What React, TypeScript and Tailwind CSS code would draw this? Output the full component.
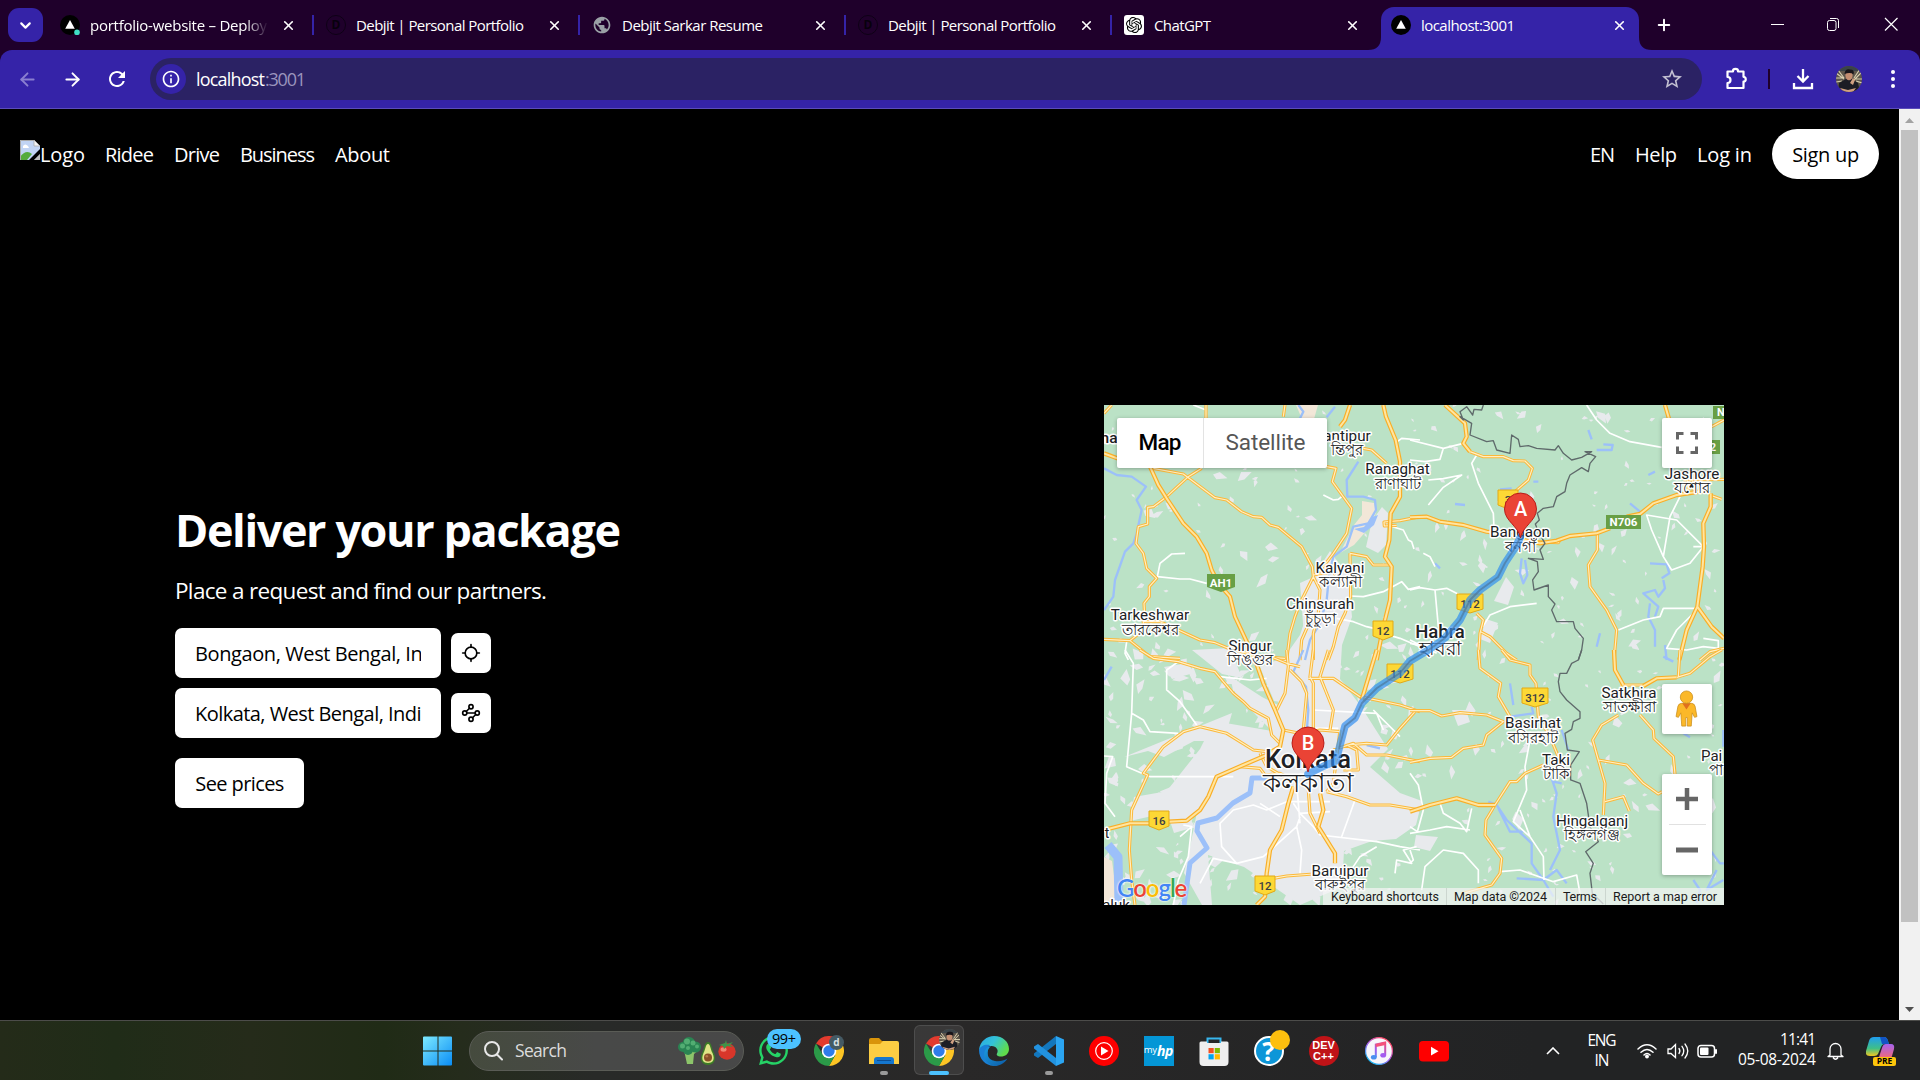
import { useLayoutEffect, useRef, useState, type ReactNode } from "react";
import { Locate, Waypoints, X, Plus, ArrowLeft, ArrowRight, ChevronDown } from "lucide-react";
import { MdRefresh, MdStarBorder, MdPublic, MdInfoOutline } from "react-icons/md";
import { SiOpenai } from "react-icons/si";
import { FaWhatsapp } from "react-icons/fa";

/* Single line of text whose tracking is tuned so that it fills `w` pixels. */
function Fit({ w, children }: { w: number; children: string }) {
  const ref = useRef<HTMLSpanElement>(null);
  const [tracking, setTracking] = useState(0);
  useLayoutEffect(() => {
    const el = ref.current;
    if (!el) return;
    el.style.letterSpacing = "0px";
    setTracking((w - el.getBoundingClientRect().width) / (children.length - 1 || 1));
  }, [w, children]);
  return (
    <span className="inline-block whitespace-nowrap" style={{ width: w }}>
      <span ref={ref} className="inline-block" style={{ letterSpacing: `${tracking}px` }}>
        {children}
      </span>
    </span>
  );
}

/* ---------- browser chrome ---------- */

const VercelIcon = ({ dot }: { dot?: boolean }) => (
  <svg viewBox="0 0 20 20" className="size-5 shrink-0">
    <circle cx="10" cy="10" r="10" fill="#000" />
    <path d="M10 5l4.800 8.800H5.200z" fill="#fff" />
    {dot && <circle cx="17" cy="17.400" r="2.800" fill="#3fe0c5" />}
  </svg>
);

const PortfolioIcon = () => (
  <span className="flex size-5 shrink-0 items-center justify-center rounded-full border border-[#0e0016] text-[12px] font-bold text-[#08000d]">
    D
  </span>
);

const tabs: { title: string; w: number; icon: ReactNode }[] = [
  { title: "Debjit | Personal Portfolio", w: 168, icon: <PortfolioIcon /> },
  { title: "Debjit Sarkar Resume", w: 141, icon: <MdPublic className="size-5 shrink-0 text-[#9aa0a6]" /> },
  { title: "Debjit | Personal Portfolio", w: 168, icon: <PortfolioIcon /> },
  {
    title: "ChatGPT",
    w: 57,
    icon: (
      <span className="flex size-5 shrink-0 items-center justify-center rounded-[3px] bg-white">
        <SiOpenai className="size-4 text-black" />
      </span>
    ),
  },
];

function TabStrip() {
  return (
    <div className="flex h-[50px] bg-[#1f002b] text-[15px] text-white">
      <div className="flex w-[43px] items-center pl-2">
        <div className="flex h-[34px] w-[35px] items-center justify-center rounded-[11px] bg-[#3523a8]">
          <ChevronDown className="size-[17px]" strokeWidth={3} />
        </div>
      </div>
      <div className="flex w-[269px] items-center pl-[17px]">
        <VercelIcon dot />
        <div className="ml-[10px] w-[178px] pt-px [mask-image:linear-gradient(to_right,black_87%,transparent)]">
          <Fit w={177}>portfolio-website – Deploy</Fit>
        </div>
        <X className="ml-[13px] size-[15px]" strokeWidth={2.600} />
      </div>
      {tabs.map((t, i) => (
        <div key={i} className="flex w-[266px] items-center">
          <div className="h-5 w-[2px] bg-[#3523a8]" />
          <div className="ml-[12px] mr-[10px]">{t.icon}</div>
          <span className="pt-px">
            <Fit w={t.w}>{t.title}</Fit>
          </span>
          <X className="ml-auto mr-[16px] size-[15px]" strokeWidth={2.600} />
        </div>
      ))}
      <div className="relative ml-[5px] mt-[7px] flex h-[43px] w-[258px] items-center rounded-t-[13px] bg-[#3523a8] pb-[7px] pl-[10px]">
        <svg className="absolute -left-[13px] bottom-0 size-[13px]" viewBox="0 0 13 13">
          <path d="M13 0v13H0Q13 13 13 0z" fill="#3523a8" />
        </svg>
        <svg className="absolute -right-[13px] bottom-0 size-[13px]" viewBox="0 0 13 13">
          <path d="M0 0v13h13Q0 13 0 0z" fill="#3523a8" />
        </svg>
        <VercelIcon />
        <span className="ml-[10px] pt-px">
          <Fit w={94}>localhost:3001</Fit>
        </span>
        <X className="ml-auto mr-[12px] size-[15px]" strokeWidth={2.600} />
      </div>
      <Plus className="ml-[16px] mt-[16px] size-[18px]" strokeWidth={2.600} />
      <svg className="ml-[96px] mt-[14px] h-5 w-[140px]" viewBox="0 0 140 20" fill="none" stroke="#fff">
        <path d="M2 10.500h13" />
        <rect x="58.500" y="6.500" width="8.500" height="10" rx="2" />
        <path d="M61 4.500h6.500a2 2 0 012 2V14" />
        <path d="M116 4l12.500 12.500M128.500 4L116 16.500" strokeWidth="1.200" />
      </svg>
    </div>
  );
}

const Avatar = ({ className }: { className: string }) => (
  <svg viewBox="0 0 26 26" className={className}>
    <defs>
      <clipPath id="avatarRound">
        <circle cx="13" cy="13" r="13" />
      </clipPath>
    </defs>
    <g clipPath="url(#avatarRound)">
      <rect width="26" height="26" fill="#5d564b" />
      <rect width="26" height="5" fill="#3a4348" />
      <path d="M0 7l8 6M2 4l6 8M26 6l-8 8M24 3l-6 9M0 12h7M19 13h7M0 16l6-1M26 17l-6-2" stroke="#d8cfae" strokeWidth="1.200" />
      <path d="M2 26l1-9 7-4h6l6 4 2 9z" fill="#1c1d24" />
      <ellipse cx="13" cy="9.500" rx="3.600" ry="4.800" fill="#c38d70" />
      <path d="M8.500 8Q9 2.500 14 3.500q5 0 3.500 5-3-2.500-9-.5z" fill="#17151a" />
      <path d="M14 17l3-5 2 2-2 5zM4 22l8 2 8-2-3 4H7z" fill="#d0a081" />
    </g>
  </svg>
);

function Toolbar() {
  return (
    <div className="bg-[#1f002b]">
      <div className="flex h-[59px] items-center rounded-t-[12px] border-b border-[#5b4cba] bg-[#3523a8] text-white">
        <ArrowLeft className="ml-[17px] size-[21px] text-[#8a7fd0]" strokeWidth={2.200} />
        <ArrowRight className="ml-[24px] size-[21px]" strokeWidth={2.200} />
        <MdRefresh className="ml-[22px] size-[24px]" />
        <div className="ml-[21px] flex h-[42px] w-[1552px] items-center rounded-full bg-[#2b2264] pl-[6px] pr-[18px]">
          <span className="flex size-[30px] items-center justify-center rounded-full bg-[#3523a8]">
            <MdInfoOutline className="size-5" />
          </span>
          <span className="ml-[10px] flex text-[18px]">
            <Fit w={69}>localhost</Fit>
            <span className="text-[#9a94bd]">
              <Fit w={41}>:3001</Fit>
            </span>
          </span>
          <MdStarBorder className="ml-auto size-[24px] text-[#c3c0d2]" />
        </div>
        <svg className="ml-[22px] size-6" viewBox="0 0 24 24" fill="none" stroke="#fff" strokeWidth="2.200" strokeLinejoin="round">
          <path d="M3.500 4.500h5.500v-.5a2.500 2.200 0 015 0v.5h5.500v5.300a2.200 2.300 0 010 4.700V21h-16v-5a3 3 0 000-6z" />
        </svg>
        <div className="ml-[20px] h-5 w-[2px] bg-[#1f002b]" />
        <svg className="ml-[21px] size-6" viewBox="0 0 24 24" fill="none" stroke="#fff" strokeWidth="2.300">
          <path d="M12 2v12M6.500 9l5.500 5.500L17.500 9M3 16v5h18v-5" />
        </svg>
        <Avatar className="ml-[21px] size-[26px]" />
        <svg className="ml-[25px] h-6 w-[12px]" viewBox="0 0 12 24" fill="#fff">
          <circle cx="6" cy="5" r="2" />
          <circle cx="6" cy="12" r="2" />
          <circle cx="6" cy="19" r="2" />
        </svg>
      </div>
    </div>
  );
}

/* ---------- page ---------- */

const BrokenImage = () => (
  <svg viewBox="0 0 20 20" className="size-5">
    <path d="M0 0h14l6 6v8L14 20H0z" fill="#c1d4f4" />
    <path d="M0 20v-3q6-8 12-3l-5 6z" fill="#55ab3c" />
    <path d="M3 6q2-3 5 0l1 2H3z" fill="#fff" />
    <path d="M.500 20V.500h13.500" fill="none" stroke="#a9a9a9" />
    <path d="M14 0l6 6h-6z" fill="#f4f4f4" stroke="#a9a9a9" strokeWidth=".8" />
    <path d="M20 9v5l-6 6H9z" fill="#000" />
    <path d="M20 14v6h-6z" fill="#bcbcbc" />
  </svg>
);

function Nav() {
  return (
    <nav className="flex h-[90px] items-center px-5 text-[20px] text-white">
      <div className="flex gap-5 pt-[2px]">
        <div className="flex w-[65px]">
          <BrokenImage />
          <Fit w={45}>Logo</Fit>
        </div>
        <Fit w={49}>Ridee</Fit>
        <Fit w={46}>Drive</Fit>
        <Fit w={75}>Business</Fit>
        <Fit w={55}>About</Fit>
      </div>
      <div className="ml-auto flex items-center gap-5">
        <span className="flex gap-5 pt-[2px]">
          <Fit w={25}>EN</Fit>
          <Fit w={42}>Help</Fit>
          <Fit w={55}>Log in</Fit>
        </span>
        <button className="h-[50px] w-[107px] rounded-full bg-white pt-[2px] text-black">
          <Fit w={67}>Sign up</Fit>
        </button>
      </div>
    </nav>
  );
}

function DeliveryForm() {
  return (
    <div className="flex w-[460px] flex-col pt-[100px] text-[20px] text-black">
      <h1 className="text-[45px] leading-[50px] font-bold text-white">
        <Fit w={446}>Deliver your package</Fit>
      </h1>
      <p className="mt-[18px] text-[22.500px] leading-[35px] text-white">
        <Fit w={372}>Place a request and find our partners.</Fit>
      </p>
      <div className="mt-[20px] flex items-center gap-[10px]">
        <div className="flex h-[50px] w-[266px] items-center rounded-[7px] bg-white px-5 pt-[2px]">
          <div className="w-[226px] overflow-hidden">
            <Fit w={255}>Bongaon, West Bengal, India</Fit>
          </div>
        </div>
        <button className="flex size-10 items-center justify-center rounded-[7px] bg-white">
          <Locate className="size-5" />
        </button>
      </div>
      <div className="mt-[10px] flex items-center gap-[10px]">
        <div className="flex h-[50px] w-[266px] items-center rounded-[7px] bg-white px-5 pt-[2px]">
          <div className="w-[227px] overflow-hidden">
            <Fit w={237}>Kolkata, West Bengal, India</Fit>
          </div>
        </div>
        <button className="flex size-10 items-center justify-center rounded-[7px] bg-white">
          <Waypoints className="size-5" />
        </button>
      </div>
      <button className="mt-[20px] h-[50px] w-[129px] rounded-[7px] bg-white pt-[2px]">
        <Fit w={89}>See prices</Fit>
      </button>
    </div>
  );
}

/* ---------- map ---------- */

/* The terrain is split in four tiles drawn at three times their shown size. */
type Tile = { at: [number, number]; roads: string; trunk: string; lanes: string; water: string };

const tiles: Tile[] = [
  {
    at: [-12, -15],
    trunk:
      "M150 200L175 255 200 295 250 370 290 410 320 460 335 510 355 550 390 590 405 650 440 725 465 790M12 160L60 178M850 15L858 50 887 120 900 185 900 290 872 340 868 420 855 470 875 500 870 600 850 680 830 780M750 15L735 60 720 80",
    roads:
      "M305 205L265 230 200 290 160 320 143 322 143 372 115 380 108 430 130 460 140 505 170 535 148 560 148 590 132 610 135 665 175 665M160 205L250 222 345 293 380 300 425 335 460 350 485 352 510 375 535 382 605 440 637 500 640 530 600 610 585 650 570 700 560 780M640 530L660 570 655 640 640 700 640 780M12 718L90 722 130 690 130 665 180 665 235 690 300 720 345 728 385 745 480 770 555 775M90 722L150 770 240 775M680 200L708 205 697 245 755 325 740 400 700 460 670 500 650 520M960 350L900 362 852 366 853 378 890 376M750 460L800 470 820 495 870 495M750 460L752 590 735 640 715 680 700 740 685 780M640 525L700 515 720 550M790 145L815 150 860 190M318 15V55M555 15L550 50M12 40L35 15M600 780L605 720 640 640",
    lanes:
      "M255 460L215 462 180 490 172 530 240 537 270 537 320 550M670 285L700 300 715 298 725 290M960 120L905 115 885 130M280 15L318 30M860 375L910 390 925 420 935 425 942 447M960 560L925 568 905 545 850 575 790 590 750 588M960 740L900 715 850 700M710 655L760 665 800 680 850 692M80 725L75 760 85 780",
    water:
      "M12 205L50 225 95 230 138 260 110 300 125 330 110 400 100 430 75 455 45 540 40 590 12 630M775 185L740 240 742 290 790 290 825 300 828 330 805 370 760 380 740 440 700 470 688 520 680 600 660 670 630 720 615 780M595 15L610 35 600 55M705 20L680 52",
  },
  {
    at: [918, -15],
    trunk:
      "M105 15L165 70 170 110 160 130 180 155M0 352L50 350 90 365 160 375 230 395 300 405 340 420 390 430 440 422 480 408 560 400 600 385M650 350L690 342 730 310 800 285 900 270M765 15L778 60M862 620L830 690 808 780M902 280L902 320 880 370 882 440 878 500 862 620 905 680 942 715",
    roads:
      "M180 155L220 170 280 170 310 182 345 183 367 205 355 240 315 275M380 425L445 428 450 420M900 285L935 298M820 240L942 238M562 400L562 450 535 495 540 560 590 630 620 690 612 780M942 60L905 80M200 640L220 660 210 700 205 780M212 695L240 710 290 760 320 780M942 745L900 755 870 780M845 205L850 270M830 215L835 280",
    lanes:
      "M0 120L100 145 160 130M100 145L90 178 45 185 0 180M200 165L185 190 205 250 250 340 252 385M530 15L560 60 600 100 660 125 755 142M55 240L100 236 155 225 100 262 55 315M0 570L30 563 75 570 110 565 160 590M75 570L85 680M215 685L240 645 300 620 380 610M810 290L780 350 760 470 785 510 840 490 880 440 800 360 710 345 725 390 760 470M625 690L700 660 750 650 760 625 860 625M860 630L800 690 770 745 830 750 880 740 925 745 925 722 880 715M40 460L60 470 75 500M880 440L850 440M0 730L60 740M0 720L80 760",
    water:
      "M535 90L545 118M560 150L605 150 608 135 580 133M335 475L330 520 340 550 352 525 345 480M720 490L770 493 778 520 755 535M760 540L765 565 745 590 735 570 700 580 745 620 735 650M720 610L715 650 735 690 735 740M270 268L305 265M135 312L165 315M660 310L690 335M715 225L735 215M570 700L560 740M370 245L385 245M765 735L770 780M75 490L90 505",
  },
  {
    at: [-12, 735],
    trunk:
      "M462 20L490 100 525 180 550 240 540 290 515 305M12 540L90 520 165 520M205 515L260 512 300 480 325 440 350 380 430 345 500 315M580 410L565 460 545 540 510 600 500 670 495 740 470 765M660 430L670 480 655 530 705 610 705 640M830 0L800 100 785 150",
    roads:
      "M120 0L160 25 235 35 300 55 345 65 370 95 400 130 430 155 450 175 505 205 515 255 540 280M560 0L565 50 555 130 530 180M500 15L560 40 600 50M605 95L570 60M605 95L620 130 610 240M640 0L630 80 640 100 640 240M685 0L660 80 700 180 690 240M625 85L700 85 780 140 900 165 960 185M550 240L600 250 660 240 720 245M720 240L700 400 680 425M300 230L250 245 190 290 130 370 143 375 95 480 88 600 95 690 105 765M300 230L340 240 380 250 460 300 500 305M420 350L480 355 495 375 540 370 580 390M480 310L500 350 560 385M520 685L560 678 640 672M625 420L630 490 660 550M680 425L740 440 810 465 870 465 960 480M740 285L800 280 860 285 900 235 945 185M740 285L770 300 775 360 730 360M700 300L760 280 800 315 860 315 960 335",
    lanes:
      "M75 0L100 40 95 190 80 350 150 380M95 190L130 210 150 245 235 250M235 35L200 60 200 120 240 155 290 225M12 318L38 320 20 370 15 460 45 500M150 380L400 380M360 80L450 90 500 85M240 560L275 530 250 525M275 530L265 620 235 690 220 765M300 700L340 625 410 640 490 620 590 530 600 500M410 640L365 590 360 520 400 480 460 465 500 480 560 455 690 455M580 460L600 490 690 485M600 490L640 530 660 555 830 575 900 590 960 600M765 450L725 560M590 530L605 600 600 670M830 590L780 620 740 680M640 180L830 190 850 240M640 235H715M590 400L600 520M950 590L910 600 935 640 890 630 885 670M480 460L540 500M820 180L900 260",
    water: "M610 0L580 65 618 110 625 180 620 250 600 360M12 90L35 50M800 285L840 295",
  },
  {
    at: [918, 735],
    trunk: "M0 485L60 465 140 445 205 465 255 465M700 108L740 85 800 82M612 0L615 60 640 105",
    roads:
      "M205 0L210 55 272 100 265 140 300 200M275 0L300 30 360 45 360 75 378 100 385 200 420 260 445 320M0 182L60 182 95 198 150 188 230 195 280 215 230 255 220 285 160 295 125 322 60 325 0 337M255 465L300 395 320 395 345 370 400 345M255 465L228 510 225 555 275 625 270 670 245 705 160 730M630 105H700M800 82L840 70 900 20 935 0M805 80L810 0M625 195L575 225 548 270 565 330 585 400 580 495M565 330L650 345 700 400 745 432 756 425M690 195L730 240 732 265 790 320 795 372M585 455L640 440 658 483",
    lanes:
      "M360 270L345 350 350 420 310 515 360 560 400 620 402 690M0 370L25 405 40 480 22 545 0 530M90 460L100 490 150 520 170 545 185 475M0 550L60 540 110 530 180 540M35 720L45 650 100 600 160 610 205 660 205 700M270 665L330 660 430 695 500 675 510 730M0 640L10 630 0 600M330 480L360 560",
    water:
      "M235 455L260 465 290 510 365 580 365 640 400 690 430 740M420 370L440 430 430 500 450 600 420 660M265 475L300 545 340 545M455 240L475 300M300 200L370 190 365 170M455 400L430 395M320 685L400 690 440 660 470 700M820 250L840 262M940 240V290M850 690L870 720 860 760M900 600L930 640 942 640M920 660L890 720 940 690M300 100L310 165M760 20L790 35",
  },
];

/* Small pale settlements scattered with a fixed seed; the south-west is denser. */
function makePatches(count: number) {
  let s = 77;
  const rnd = () => {
    s = (s * 16807) % 2147483647;
    return s / 2147483647;
  };
  let d = "";
  for (let i = 0; i < count; i++) {
    const dense = i % 3 === 0;
    const x = dense ? rnd() * 310 : rnd() * 620;
    const y = dense ? 240 + rnd() * 260 : rnd() * 500;
    const r = dense ? 4 + rnd() * 6 : 2.5 + rnd() * rnd() * 8;
    const a = rnd() * 6.283;
    const p = (t: number, k: number) => `${(x + Math.cos(a + t) * r * k).toFixed(1)} ${(y + Math.sin(a + t) * r * k).toFixed(1)}`;
    d += `M${p(0, 1)}L${p(1.7, 0.3 + rnd() * 0.4)}L${p(2.8, 0.5 + rnd() * 0.5)}L${p(4.6, 0.2 + rnd() * 0.4)}z`;
  }
  return d;
}
const patches = makePatches(560);

const towns: [string, string, number, number, number][] = [
  ["Ranaghat", "রাণাঘাট", 293.5, 68.5, 84],
  ["Kalyani", "কল্যানী", 236, 167.500, 182],
  ["Chinsurah", "চুঁচুড়া", 216, 204, 219],
  ["Tarkeshwar", "তারকেশ্বর", 46, 215, 230],
  ["Singur", "সিঙ্গুর", 146, 246, 260],
  ["antipur", "ন্তিপুর", 243, 36, 50],
  ["Bangaon", "বনগাঁ", 416, 132, 147],
  ["Jashore", "যশোর", 588, 73.500, 88],
  ["Satkhira", "সাতক্ষীরা", 525, 293, 307],
  ["Basirhat", "বসিরহাট", 429, 323, 338],
  ["Taki", "টাকি", 452, 359.500, 374],
  ["Hingalganj", "হিঙ্গলগঞ্জ", 488, 421, 435],
  ["Baruipur", "বারুইপুর", 236, 471, 485],
];

const shields: [string, number, number][] = [
  ["12", 279, 225],
  ["112", 366, 198],
  ["112", 296, 268],
  ["312", 431, 292],
  ["16", 55, 415],
  ["12", 161, 480],
  ["3", 404, 94],
];

function Pin({ x, y, letter }: { x: number; y: number; letter: string }) {
  return (
    <g transform={`translate(${x} ${y})`}>
      <path d="M0 0C-2-12-16-17-16-29a16 16 0 0132 0C16-17 2-12 0 0z" fill="#ea4335" stroke="#b31412" strokeWidth=".9" />
      <text y="-22.500" textAnchor="middle" fontSize="20" fontWeight="500" fill="#fff" fontFamily="Roboto">
        {letter}
      </text>
    </g>
  );
}

function MapCanvas() {
  return (
    <svg viewBox="0 0 620 500" className="h-[500px] w-[620px]" fill="none" strokeLinejoin="round">
      <rect width="620" height="500" fill="#bbe2c6" />
      <path
        d="M196 230L182 250 174 300 158 292 124 270 132 290 160 318 168 326 110 316 96 344 58 392 70 428 84 424 94 402 86 442 80 468 98 500 108 500 104 450 140 462 170 482 196 500 238 482 240 446 268 436 292 434 312 420 318 396 296 388 266 362 284 344 270 322 256 300 236 274 238 240 248 212 246 190 250 168 236 160 226 146 212 168 206 200z"
        fill="#e8eaed"
      />
      <path
        d="M278 102L268 116 262 142 274 148 282 140 284 108zM196 178L214 170 236 172 244 200 228 230 200 232zM190 248L156 262 170 296 200 300zM128 308L20 352 44 346 60 352 90 336 120 336zM30 392l34-6 6 20-44 10zM402 172l8 10-6 18-14-4zM382 214l12 4-8 20-10-4zM348 305l14 0 4 12-12 4zM88 245l38-2 12 30-20-4zM60 262l24-4 6 10-22 6zM312 430l22 2-8 14-16-4z"
        fill="#e8eaed"
      />
      <path d={patches} fill="#e8eaed" />
      <path d="M192 0h22l-4 14h-12zM258 96l12 2 2 10-8 16-14 16-14 8 8-16 6-12 8-10zM0 452l8 4 6 44H0z" fill="#f2e7d8" />
      <path d="M172 373H148L146 388 129 398 113 413 94 418 93 426 103 443 86 458 80 500" stroke="#9cc0f9" strokeWidth="5" />
      <path d="M4 440L14 452 15 500" stroke="#9cc0f9" strokeWidth="9" />
      <path d="M250 124l10-2 8-10 6-2-4 10-10 8z" fill="#9cc0f9" />
      {tiles.map((t, i) => (
        <g key={i} transform={`scale(.33333) translate(${t.at[0]} ${t.at[1]})`}>
          <path d={t.water} stroke="#9cc0f9" strokeWidth="7" />
          <path d={t.lanes} stroke="#fff" strokeWidth="5" />
          <path d={t.roads} stroke="#fbb83a" strokeWidth="9.500" />
          <path d={t.roads} stroke="#fff0c4" strokeWidth="3.500" />
          <path d={t.trunk} stroke="#f9ae27" strokeWidth="13" />
          <path d={t.trunk} stroke="#ffe59f" strokeWidth="6" />
        </g>
      ))}
      <g stroke="#5f6a6b" strokeWidth="4">
        <path
          transform="scale(.33333) translate(918 -15)"
          d="M220 15L215 30 192 28 188 45 170 20 150 35 160 60 150 50 185 70 180 105 230 125 250 122 260 150 300 160 305 105 325 118 330 140 355 137 380 145 435 150 445 137 460 160 485 180 515 172 545 155 525 155 557 170 540 190 535 215 515 203 480 225 470 250 465 275 440 290 430 320 400 325 382 340 388 360 376 372 385 395 405 430 390 450 400 478 355 475 382 485 385 515 368 540 372 570 415 555 415 590 435 612 425 630 440 665 490 665 495 685 520 715 515 750 505 780"
        />
        <path
          transform="scale(.33333) translate(918 735)"
          d="M515 0L505 30 485 40 470 70 450 70 445 95 450 125 470 150 510 185 510 205 490 215 485 238 465 250 472 300 508 305 482 345 482 390 510 400 530 460 540 530 565 575 527 605 550 640 540 670 547 730 580 762"
        />
      </g>

      <g fontFamily="Roboto, 'Noto Sans', sans-serif" fill="#202124" textAnchor="middle">
        {shields.map(([n, x, y], i) => (
          <g key={i}>
            <path
              d={n.length > 2 ? `M${x - 13} ${y - 9}h26v15l-13 4-13-4z` : `M${x - 10} ${y - 9}h20v15l-10 4-10-4z`}
              fill="#fdd835"
              stroke="#e2a916"
            />
            <text x={x} y={y + 5} fontSize="11.500" fontWeight="500" fill="#3c4043">
              {n}
            </text>
          </g>
        ))}
        <path d="M103 169h28v13l-14 5-14-5z" fill="#689f45" />
        <text x="117" y="182" fontSize="11.500" fontWeight="700" fill="#fff">AH1</text>
        <rect x="502" y="110" width="35" height="14" fill="#689f45" />
        <text x="519.500" y="121" fontSize="11.500" fontWeight="700" fill="#fff">N706</text>
        <rect x="609" y="1" width="14" height="13" fill="#689f45" />
        <text x="617" y="11" fontSize="11" fontWeight="700" fill="#fff">N</text>
        <rect x="594" y="35" width="22" height="14" fill="#689f45" />
        <text x="609" y="46" fontSize="11" fontWeight="700" fill="#fff">2</text>

        <g stroke="#fff" strokeWidth="3" paintOrder="stroke">
          {towns.map(([en, bn, x, y1, y2]) => (
            <g key={en}>
              <text x={x} y={y1} fontSize="15.200">{en}</text>
              <text x={x} y={y2} fontSize="15">{bn}</text>
            </g>
          ))}
          <text x="336" y="232.500" fontSize="18.500" fontWeight="500">Habra</text>
          <text x="336" y="250" fontSize="18.500">হাবরা</text>
          <text x="204" y="363" fontSize="25.500" fontWeight="500">Kolkata</text>
          <text x="204" y="386.500" fontSize="25.500">কলকাতা</text>
          <text x="5" y="38" fontSize="15.500" fontWeight="500">na</text>
          <text x="597" y="356" fontSize="15" textAnchor="start">Pai</text>
          <text x="605" y="370" fontSize="15" textAnchor="start">পা</text>
          <text x="3" y="433" fontSize="14">t</text>
          <text x="12" y="505" fontSize="15">aluk</text>
        </g>
      </g>

      <path
        d="M416 133L411 143 401 158 394 172 376 185 366 195 356 215 341 233 326 244 306 256 296 268 273 283 258 298 251 313 241 321 235 344 232 356 220 361 204 369"
        stroke="#2c8cf0"
        strokeOpacity=".68"
        strokeWidth="7.500"
        strokeLinecap="round"
      />
      <path
        d="M416 133L411 143 401 158 394 172 376 185 366 195 356 215 341 233 326 244 306 256 296 268 273 283 258 298 251 313 241 321 235 344"
        stroke="#4b7091"
        strokeOpacity=".6"
        strokeWidth="1.800"
      />
      <Pin x={416.5} y={133} letter="A" />
      <Pin x={204} y={367} letter="B" />
    </svg>
  );
}

const Pegman = () => (
  <svg viewBox="0 0 24 40" className="h-[38px] w-[23px]">
    <path d="M3 17q1-3 4-3h10q3 0 4 3l2 11-2.500.800L18 24l-1 14h-4.200v-9h-1.600v9H7l-1-14-2.500 4.800L1 28z" fill="#fbb829" stroke="#c98d1a" strokeWidth=".8" />
    <path d="M7.500 14h9L12 20.500z" fill="#e0701e" />
    <circle cx="12" cy="7.500" r="6.500" fill="#fbb829" stroke="#c98d1a" strokeWidth=".8" />
  </svg>
);

function MapPanel() {
  return (
    <div className="relative h-[500px] w-[620px] overflow-hidden font-[Roboto]">
      <MapCanvas />
      <div className="absolute left-[13px] top-[13px] flex h-[50px] items-center rounded-[2px] bg-white text-[22.500px] shadow-[0_1px_4px_rgba(0,0,0,0.3)]">
        <div className="flex h-full w-[87px] items-center justify-center border-r border-[#e3e3e3] font-medium text-black">
          <Fit w={43}>Map</Fit>
        </div>
        <div className="flex h-full w-[123px] items-center justify-center text-[#565656]">
          <Fit w={80}>Satellite</Fit>
        </div>
      </div>
      <div className="absolute right-[12px] top-[13px] flex size-[50px] items-center justify-center rounded-[2px] bg-white shadow-[0_1px_4px_rgba(0,0,0,0.3)]">
        <svg viewBox="0 0 22 22" className="size-[22px]" fill="none" stroke="#666" strokeWidth="3">
          <path d="M1.500 7.500v-6h6M14.500 1.500h6v6M20.500 14.500v6h-6M7.500 20.500h-6v-6" />
        </svg>
      </div>
      <div className="absolute right-[12px] top-[279px] flex size-[50px] items-center justify-center rounded-[2px] bg-white shadow-[0_1px_4px_rgba(0,0,0,0.3)]">
        <div className="pr-[2px]">
          <Pegman />
        </div>
      </div>
      <div className="absolute right-[12px] top-[369px] flex h-[101px] w-[50px] flex-col items-center rounded-[2px] bg-white shadow-[0_1px_4px_rgba(0,0,0,0.3)]">
        <svg viewBox="0 0 22 22" className="mt-[14px] size-[22px]" stroke="#666" strokeWidth="4.500">
          <path d="M0 11h22M11 0v22" />
        </svg>
        <div className="mt-[14px] h-px w-[37px] bg-[#e1e1e1]" />
        <svg viewBox="0 0 22 22" className="mt-[14px] size-[22px]" stroke="#666" strokeWidth="5">
          <path d="M0 11h22" />
        </svg>
      </div>
      <div className="absolute bottom-0 left-[13px] font-[Lato] text-[24px] leading-[34px] font-semibold tracking-[-1.100px] text-[#4285f4] [text-shadow:0_0_2px_white,0_0_2px_white]">
        G<span className="text-[#ea4335]">o</span>
        <span className="text-[#fbbc05]">o</span>g<span className="text-[#34a853]">l</span>
        <span className="text-[#ea4335]">e</span>
      </div>
      <div className="absolute bottom-0 right-0 flex h-[17px] items-center bg-[#f5f5f5]/70 pt-px text-[12.500px] text-[#1a1a1a]">
        <span className="flex w-[123px] justify-end pr-[7px]">
          <Fit w={108}>Keyboard shortcuts</Fit>
        </span>
        <span className="border-l border-black/10 pl-[7px] pr-[8px]">
          <Fit w={93}>Map data ©2024</Fit>
        </span>
        <span className="border-l border-black/10 pl-[7px] pr-[8px]">
          <Fit w={34}>Terms</Fit>
        </span>
        <span className="border-l border-black/10 pl-[7px] pr-[7px]">
          <Fit w={104}>Report a map error</Fit>
        </span>
      </div>
    </div>
  );
}

function ScrollBar() {
  return (
    <div className="flex w-[21px] flex-col items-center bg-[#f1f1f1]">
      <svg viewBox="0 0 21 21" className="size-[21px]">
        <path d="M6 14h9l-4.500-5z" fill="#a3a3a3" />
      </svg>
      <div className="h-[792px] w-[17px] bg-[#c1c1c1]" />
      <svg viewBox="0 0 21 21" className="mt-auto size-[21px]">
        <path d="M6 8h9l-4.500 5z" fill="#505050" />
      </svg>
    </div>
  );
}

/* ---------- taskbar ---------- */

const Chrome = () => (
  <svg viewBox="0 0 30 30" className="size-[30px]">
    <path d="M15 15L2 7.500a15 15 0 0126 0z" fill="#e33b2e" />
    <path d="M15 8h13.300A15 15 0 0115 30l6.300-11z" fill="#fdc524" />
    <path d="M2 7.500L8.800 18.500 15 22l6.300-3L15 30A15 15 0 012 7.500z" fill="#2b9a48" />
    <circle cx="15" cy="15" r="7.300" fill="#fff" />
    <circle cx="15" cy="15" r="5.700" fill="#2f7cea" />
  </svg>
);

const WindowsLogo = () => (
  <svg viewBox="0 0 30 30" className="size-[30px]">
    <defs>
      <linearGradient id="win" x1="0" y1="0" x2="1" y2="1">
        <stop offset="0" stopColor="#7deaff" />
        <stop offset="1" stopColor="#0a8df5" />
      </linearGradient>
    </defs>
    <path
      d="M1 .500h13.500V14.500H0V1.500a1 1 0 011-1zM15.500.500H28a1 1 0 011 1v13H15.500zM0 15.500h14.500v14H1a1 1 0 01-1-1zM15.500 15.500H29v13a1 1 0 01-1 1H15.500z"
      fill="url(#win)"
    />
  </svg>
);

const Vegetables = () => (
  <svg viewBox="0 0 58 28" className="h-[28px] w-[58px]">
    <path d="M6 13l3 14h6l1-10 5-4z" fill="#8cc56a" />
    <g fill="#2a8452">
      <circle cx="5" cy="10" r="5" />
      <circle cx="11" cy="6.500" r="6.500" />
      <circle cx="17.500" cy="10" r="5.500" />
      <circle cx="10" cy="13" r="5" />
    </g>
    <g fill="#52ad72">
      <circle cx="9" cy="4.500" r="3" />
      <circle cx="15" cy="6" r="2.500" />
      <circle cx="4.500" cy="9" r="2.500" />
      <circle cx="10" cy="11" r="2" />
      <circle cx="19" cy="9.500" r="2" />
    </g>
    <path d="M30 5c-3.500 0-3.500 6-5.500 10-4 8 0 13 5.500 13s9.500-5 5.500-13c-2-4-2-10-5.500-10z" fill="#3c7c26" />
    <path d="M30 7c-2.500 0-2.500 6-4.500 9-3 7 0 10 4.500 10s7.500-3 4.500-10c-2-3-2-9-4.500-9z" fill="#dfe486" />
    <circle cx="30" cy="20.500" r="4" fill="#8b4f28" />
    <circle cx="28.800" cy="19.300" r="1.300" fill="#b77a4c" />
    <ellipse cx="49" cy="14.500" rx="8.700" ry="8.300" fill="#d8362a" />
    <ellipse cx="45.500" cy="12.500" rx="3" ry="2.200" fill="#f08673" />
    <path d="M48 3l1 4 6-2-3 3 3 2-6-1-3 3-1-3-4-1 6-2z" fill="#3f9348" />
  </svg>
);

const Folder = () => (
  <svg viewBox="0 0 30 28" className="h-[28px] w-[30px]">
    <path d="M0 3q0-2 2-2h8l3 3h10v6H0z" fill="#d9940a" />
    <path d="M0 7h11l3-3h14q2 0 2 2v21H0z" fill="#fccd43" />
    <path d="M5 27v-4q0-3 3-3h14q3 0 3 3v4z" fill="#1577cf" />
    <path d="M8 23.500h14" stroke="#0c4f95" />
  </svg>
);

const Edge = () => (
  <svg viewBox="0 0 30 30" className="size-[30px]">
    <defs>
      <linearGradient id="edgeTop" x1="0" y1="0" x2="1" y2=".5">
        <stop offset="0" stopColor="#29a7e5" />
        <stop offset=".5" stopColor="#33c2d8" />
        <stop offset="1" stopColor="#5fdc4c" />
      </linearGradient>
      <linearGradient id="edgeLow" x1="0" y1="0" x2="1" y2="1">
        <stop offset="0" stopColor="#1b9de2" />
        <stop offset="1" stopColor="#0c59a4" />
      </linearGradient>
    </defs>
    <path d="M0 14C1 5 8 0 15 0c9 0 15 6 15 13 0 5-4 7.500-8 7.500-3.500 0-5-1.500-4-3 2-3-.500-7.500-5.500-7.500C7 10 2 12 0 14z" fill="url(#edgeTop)" />
    <path d="M0 14c1-4 6-6 11-5-4 3-4 18 6 20.500C8 31 0 24 0 14z" fill="#1a80d6" />
    <path d="M12 10c-6 5-4 14 4 15 6 .8 10-1 12.500-2.500C25 28 20 30 16 30 8 29 2 21 7 13c1.500-2 3-2.500 5-3z" fill="url(#edgeLow)" />
  </svg>
);

const VsCode = () => (
  <svg viewBox="0 0 30 30" className="size-[30px]">
    <path d="M22 0v8L4 22 0 19.500v-2z" fill="#1377bd" />
    <path d="M22 30v-8L4 8 0 10.500v2z" fill="#2292df" />
    <path d="M22 0l8 3.500v23L22 30z" fill="#2ba5f2" />
  </svg>
);

const YtMusic = () => (
  <svg viewBox="0 0 30 30" className="size-[30px]">
    <circle cx="15" cy="15" r="15" fill="#fe0000" />
    <circle cx="15" cy="15" r="8.300" fill="none" stroke="#fff" strokeWidth="1.200" />
    <path d="M12 10.500l7.500 4.500-7.500 4.500z" fill="#fff" />
  </svg>
);

const Store = () => (
  <svg viewBox="0 0 30 30" className="size-[30px]">
    <path d="M8.500 8V2.500h13V8" fill="none" stroke="#37b6ee" strokeWidth="2" />
    <path d="M.500 7q0-1.500 1.500-1.500h6V7h14V5.500h6q1.500 0 1.500 1.500v19q0 4-4 4h-21q-4 0-4-4z" fill="#efefef" />
    <path d="M9.500 12h5.200v5.200H9.500z" fill="#f25022" />
    <path d="M15.700 12h5.200v5.200h-5.200z" fill="#7fba00" />
    <path d="M9.500 18.200h5.200v5.200H9.500z" fill="#00a4ef" />
    <path d="M15.700 18.200h5.200v5.200h-5.200z" fill="#ffb900" />
  </svg>
);

const Help = () => (
  <div className="relative flex size-[30px] items-center justify-center rounded-full border-2 border-white bg-[#0d96d8] text-[26px] leading-none font-bold">
    ?
    <span className="absolute -right-[8px] -top-[8px] size-5 rounded-full bg-[#fdbf0e]" />
  </div>
);

const DevCpp = () => (
  <div className="flex size-[30px] flex-col items-center justify-center rounded-full bg-[#c01317] font-['Liberation_Sans'] text-[11px] leading-[11px] font-bold">
    <span>DEV</span>
    <span>C++</span>
  </div>
);

const Music = () => (
  <svg viewBox="0 0 30 30" className="size-[30px]">
    <defs>
      <linearGradient id="note" gradientUnits="userSpaceOnUse" x1="22" y1="5" x2="7" y2="25">
        <stop offset="0" stopColor="#fb4a6c" />
        <stop offset=".55" stopColor="#9a5ef0" />
        <stop offset="1" stopColor="#22b5f4" />
      </linearGradient>
    </defs>
    <circle cx="15" cy="15" r="13.400" fill="#f8f6fb" stroke="url(#note)" strokeWidth="1.200" />
    <path d="M11.800 21V8.500l9.400-2V19" fill="none" stroke="url(#note)" strokeWidth="2" />
    <path d="M11.800 9.500l9.400-2" stroke="#f5527a" strokeWidth="3" />
    <ellipse cx="9.800" cy="21.300" rx="2.900" ry="2.300" fill="#4a8ff0" />
    <ellipse cx="19.200" cy="19.300" rx="2.900" ry="2.300" fill="#a45cf0" />
  </svg>
);

const YouTube = () => (
  <svg viewBox="0 0 30 30" className="size-[30px]">
    <rect y="5" width="30" height="20.500" rx="4" fill="#fe0000" />
    <path d="M12 10.800l7.500 4.400-7.500 4.400z" fill="#fff" />
  </svg>
);

const pinned: { icon: ReactNode; mark?: boolean }[] = [
  { icon: <Edge /> },
  { icon: <VsCode />, mark: true },
  { icon: <YtMusic /> },
  {
    icon: (
      <div className="flex size-[30px] items-center justify-center bg-[#0496d6] text-[9.500px] tracking-tight">
        my<span className="text-[14px] font-bold italic">hp</span>
      </div>
    ),
  },
  { icon: <Store /> },
  { icon: <Help /> },
  { icon: <DevCpp /> },
  { icon: <Music /> },
  { icon: <YouTube /> },
];

function Slot({ children, mark }: { children: ReactNode; mark?: boolean }) {
  return (
    <div className="relative flex h-[60px] w-[55px] items-center justify-center">
      {children}
      {mark && <span className="absolute bottom-[6px] h-1 w-2 rounded-full bg-[#9a9a9a]" />}
    </div>
  );
}

const Copilot = () => (
  <div className="relative size-[30px]">
    <svg viewBox="0 0 30 30" className="size-[30px]">
      <defs>
        <linearGradient id="copA" x1="0" y1="0" x2="0" y2="1">
          <stop offset="0" stopColor="#1f9df0" />
          <stop offset=".6" stopColor="#3fbf87" />
          <stop offset="1" stopColor="#f2c821" />
        </linearGradient>
        <linearGradient id="copB" x1="0" y1="0" x2="0" y2="1">
          <stop offset="0" stopColor="#a562ee" />
          <stop offset="1" stopColor="#fb6a6a" />
        </linearGradient>
      </defs>
      <path d="M8 1h10q3 0 4 4l1 3h-4q-3 0-4 3l-3 7q-1 2-4 2H4q-5 0-4-5L3 5q1-4 5-4z" fill="url(#copA)" />
      <path d="M14 1h4q3 0 4 4l1 3h-7z" fill="#1254c4" />
      <path d="M20 8h5q4 0 3 5l-2 7q-1 4-5 4H9q3 0 4-3l3-9q1-4 4-4z" fill="url(#copB)" />
    </svg>
    <span className="absolute bottom-0 right-0 flex h-[9px] w-[23px] items-center justify-center rounded-[2px] bg-[#fdc50b] text-[8.500px] leading-none font-bold text-black">
      PRE
    </span>
  </div>
);

function Taskbar() {
  return (
    <div className="flex h-[60px] items-center border-t border-[#4c4c4a] bg-[linear-gradient(90deg,#242b19_0%,#202c18_6%,#252b1a_13%,#202b16_20%,#252c1c_24%,#282a28_31%,#292828_50%,#222324_80%)] text-white">
      <div className="ml-[423px] flex w-[46px]">
        <WindowsLogo />
      </div>
      <div className="flex h-[40px] w-[275px] items-center rounded-full border border-[#5a5c56] bg-white/15 pl-[14px] pr-[7px]">
        <svg viewBox="0 0 19 20" className="h-5 w-[19px]" fill="none" stroke="#e8e8e8" strokeWidth="2" strokeLinecap="round">
          <circle cx="8" cy="8" r="7" />
          <path d="M13 13.500l5 5" />
        </svg>
        <span className="ml-[12px] text-[17.500px] text-[#dcdcdc]">
          <Fit w={52}>Search</Fit>
        </span>
        <div className="ml-auto">
          <Vegetables />
        </div>
      </div>
      <div className="ml-[2px] flex">
        <Slot>
          <FaWhatsapp className="size-[33px] text-[#25d366]" />
          <span className="absolute left-[21px] top-[8px] flex h-5 w-[34px] items-center justify-center rounded-full bg-[#4cc2ff] text-[14.500px] text-black">
            <Fit w={24}>99+</Fit>
          </span>
        </Slot>
        <Slot>
          <Chrome />
          <span className="absolute right-[12px] top-[14px] flex size-[15px] items-center justify-center rounded-full bg-[#455a64] text-[10px] leading-none font-bold text-[#d9e0e3]">
            d
          </span>
        </Slot>
        <Slot mark>
          <Folder />
        </Slot>
        <Slot>
          <div className="absolute left-[3px] top-[4px] h-[50px] w-[50px] rounded-[6px] border border-white/10 bg-white/8" />
          <div className="relative">
            <Chrome />
            <Avatar className="absolute -right-[6px] -top-[7px] size-[21px]" />
          </div>
          <span className="absolute bottom-[6px] h-1 w-5 rounded-full bg-[#4cc2ff]" />
        </Slot>
        {pinned.map((p, i) => (
          <Slot key={i} mark={p.mark}>
            {p.icon}
          </Slot>
        ))}
      </div>
      <svg viewBox="0 0 14 8" className="ml-auto h-2 w-[14px]" fill="none" stroke="#fff" strokeWidth="1.600">
        <path d="M1 7l6-6 6 6" />
      </svg>
      <div className="ml-[25px] flex w-[34px] flex-col items-center pb-[2px] text-[15.500px] leading-5">
        <Fit w={29}>ENG</Fit>
        <Fit w={15}>IN</Fit>
      </div>
      <svg viewBox="0 0 80 20" className="ml-[18px] h-5 w-[80px]" fill="none" stroke="#fff" strokeWidth="1.500" strokeLinecap="round">
        <path d="M1 8q9-8.500 18 0M4 11.300q6-5.500 12 0M7 14q3-3 6 0" />
        <circle cx="10" cy="15.500" r="1.200" fill="#fff" />
        <path d="M31 8h3l4.500-4.500v13L34 12.500h-3zM42 7.500q1.800 2.500 0 5M45 5.300q3.500 4.700 0 9.400M48 3q5.500 7 0 14" strokeWidth="1.300" />
        <rect x="61" y="4.500" width="16.500" height="11.500" rx="3" />
        <rect x="63" y="6.500" width="8.500" height="7.500" rx="1" fill="#fff" stroke="none" />
        <path d="M79 9v3" strokeWidth="2" />
      </svg>
      <div className="ml-[21px] flex w-[78px] flex-col items-end pb-[3px] text-[15.500px] leading-5">
        <Fit w={36}>11:41</Fit>
        <Fit w={78}>05-08-2024</Fit>
      </div>
      <svg viewBox="0 0 17 20" className="ml-[11px] h-5 w-[17px]" fill="none" stroke="#fff" strokeWidth="1.300" strokeLinejoin="round">
        <path d="M3 14V8a5.500 5.500 0 0111 0v6l2 1.500H1zM6 16.500q2.500 3.500 5 0" />
      </svg>
      <div className="ml-[22px] mr-[24px]">
        <Copilot />
      </div>
    </div>
  );
}

export default function App() {
  return (
    <div className="flex h-[1080px] w-[1920px] flex-col overflow-hidden bg-black font-['Open_Sans','Noto_Sans',sans-serif]">
      <TabStrip />
      <Toolbar />
      <div className="flex h-[911px]">
        <main className="flex flex-1 flex-col">
          <Nav />
          <div className="flex items-start justify-between pl-[175px] pr-[175px] pt-[206px]">
            <DeliveryForm />
            <MapPanel />
          </div>
        </main>
        <ScrollBar />
      </div>
      <Taskbar />
    </div>
  );
}
